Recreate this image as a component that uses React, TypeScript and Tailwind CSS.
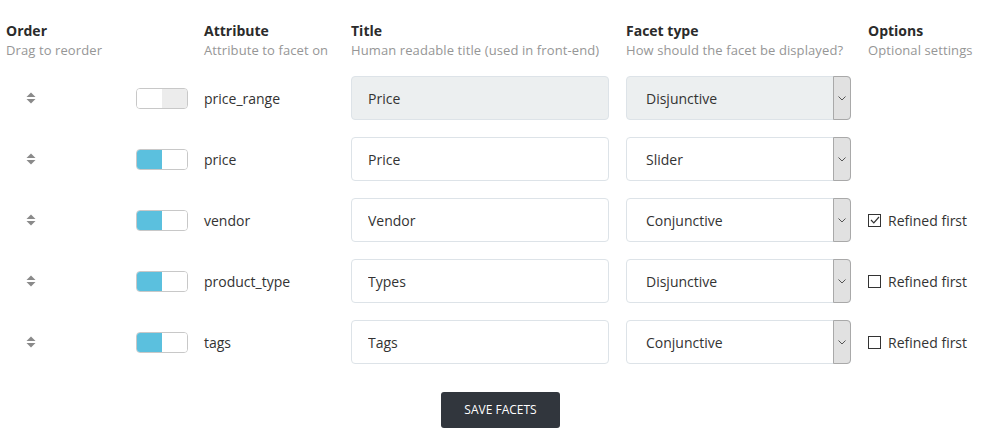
import { useState } from "react";

type Facet = {
  id: string;
  attribute: string;
  title: string;
  type: string;
  enabled: boolean;
  refined?: boolean;
};

const initialFacets: Facet[] = [
  { id: "1", attribute: "price_range", title: "Price", type: "Disjunctive", enabled: false },
  { id: "2", attribute: "price", title: "Price", type: "Slider", enabled: true },
  { id: "3", attribute: "vendor", title: "Vendor", type: "Conjunctive", enabled: true, refined: true },
  { id: "4", attribute: "product_type", title: "Types", type: "Disjunctive", enabled: true, refined: false },
  { id: "5", attribute: "tags", title: "Tags", type: "Conjunctive", enabled: true, refined: false },
];

const SortIcon = () => (
  <svg width="10" height="12" viewBox="0 0 10 12" fill="#8a8a8a">
    <path d="M5 0.5 L9.5 5 L0.5 5 Z" />
    <path d="M0.5 7 L9.5 7 L5 11.5 Z" />
  </svg>
);

const Toggle = ({ on, onClick }: { on: boolean; onClick: () => void }) => (
  <button
    onClick={onClick}
    className="flex w-[52px] h-[21px] rounded-[4px] border border-[#c8c8c8] overflow-hidden bg-white"
  >
    <span className={`w-[25px] h-full ${on ? "bg-[#5bc0de]" : "bg-white"}`}></span>
    <span className={`flex-1 h-full ${on ? "bg-white" : "bg-[#ececec]"}`}></span>
  </button>
);

const HeaderCell = ({ title, sub, className }: { title: string; sub: string; className: string }) => (
  <div className={className}>
    <div className="font-bold text-[14px] leading-[19px] text-[#2b2b2b]">{title}</div>
    <div className="text-[13px] tracking-[0.1px] leading-[20px] text-[#969696] whitespace-nowrap">{sub}</div>
  </div>
);

const App = () => {
  const [facets, setFacets] = useState<Facet[]>(initialFacets);

  const update = (id: string, updates: Partial<Facet>) => {
    setFacets((prev) => prev.map((f) => (f.id === id ? { ...f, ...updates } : f)));
  };

  return (
    <div
      className="w-[991px] h-[445px] bg-white text-[#333] px-[6px] pt-[21px]"
      style={{ fontFamily: '"Open Sans", "Liberation Sans", sans-serif' }}
    >
      <div className="flex">
        <HeaderCell title="Order" sub="Drag to reorder" className="w-[198px]" />
        <HeaderCell title="Attribute" sub="Attribute to facet on" className="w-[147px]" />
        <HeaderCell title="Title" sub="Human readable title (used in front-end)" className="w-[275px]" />
        <HeaderCell title="Facet type" sub="How should the facet be displayed?" className="w-[242px]" />
        <HeaderCell title="Options" sub="Optional settings" className="flex-1" />
      </div>

      <div className="flex flex-col gap-[17px] mt-[16px]">
        {facets.map((f) => {
          const disabled = !f.enabled;
          return (
            <div key={f.id} className="flex items-center h-[44px] text-[14px]">
              <div className="w-[130px] pl-[20px] flex items-center cursor-move">
                <SortIcon />
              </div>
              <div className="w-[68px] flex items-center">
                <Toggle on={f.enabled} onClick={() => update(f.id, { enabled: !f.enabled })} />
              </div>
              <div className="w-[147px] text-[#333]">{f.attribute}</div>
              <div className="w-[275px]">
                <input
                  value={f.title}
                  disabled={disabled}
                  onChange={(e) => update(f.id, { title: e.target.value })}
                  className={`w-[258px] h-[44px] rounded-[4px] border border-[#dde3e8] px-[16px] text-[14px] text-[#333] outline-none ${
                    disabled ? "bg-[#eceff0]" : "bg-white"
                  }`}
                />
              </div>
              <div className="w-[242px]">
                <div
                  className={`relative w-[225px] h-[44px] rounded-[4px] border border-[#dde3e8] flex items-center pl-[19px] ${
                    disabled ? "bg-[#eceff0]" : "bg-white"
                  }`}
                >
                  <span>{f.type}</span>
                  <span className="absolute right-[-1px] top-[-1px] bottom-[-1px] w-[18px] bg-[#e1e1e1] border border-[#a9a9a9] rounded-r-[4px] flex items-center justify-center">
                    <svg width="8" height="5" viewBox="0 0 8 5" fill="none" stroke="#555" strokeWidth="1">
                      <path d="M0.5 0.5 L4 4 L7.5 0.5" />
                    </svg>
                  </span>
                </div>
              </div>
              <div className="flex-1">
                {f.refined !== undefined && (
                  <label className="flex items-center gap-[7px] cursor-pointer">
                    <span
                      onClick={() => update(f.id, { refined: !f.refined })}
                      className="w-[13px] h-[13px] border border-[#333] bg-white flex items-center justify-center"
                    >
                      {f.refined && (
                        <svg width="10" height="8" viewBox="0 0 10 8" fill="none" stroke="#333" strokeWidth="1.2">
                          <path d="M1 4 L3.8 6.8 L9 1" />
                        </svg>
                      )}
                    </span>
                    <span className="text-[#333]">Refined first</span>
                  </label>
                )}
              </div>
            </div>
          );
        })}
      </div>

      <div className="flex justify-center pl-[10px] mt-[28px]">
        <button className="w-[119px] h-[36px] rounded-[3px] bg-[#31363d] text-white text-[12px] uppercase">
          Save facets
        </button>
      </div>
    </div>
  );
};

export default App;
